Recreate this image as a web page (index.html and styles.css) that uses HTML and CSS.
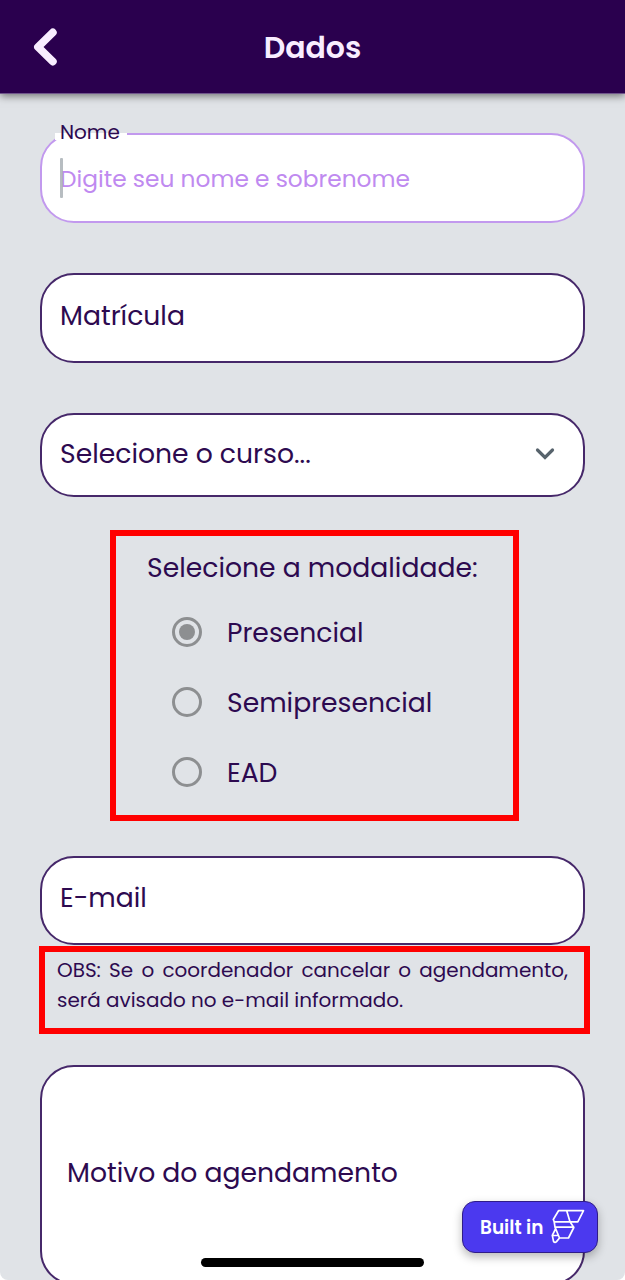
FILE: index.html
```html
<!DOCTYPE html>
<html lang="pt-BR">
<head>
<meta charset="utf-8">
<title>Dados</title>
<link rel="stylesheet" href="styles.css">
</head>
<body>
<div class="screen">
  <header class="topbar">
    <svg class="back" width="30" height="46" viewBox="0 0 30 46"><path d="M22.800 8.500L8 23L22.800 37.500" fill="none" stroke="#f8edff" stroke-width="7.800" stroke-linecap="round" stroke-linejoin="round"/></svg>
    <h1 class="title">Dados</h1>
  </header>
  <main class="form">
    <div class="field field-active">
      <span class="float-label">Nome</span>
      <span class="placeholder">Digite seu nome e sobrenome</span>
      <span class="caret"></span>
    </div>
    <div class="field field-id"><span>Matrícula</span></div>
    <div class="field field-select">
      <span>Selecione o curso...</span>
      <svg width="22" height="16" viewBox="0 0 22 16"><path d="M3.500 4L11 11.500L18.500 4" fill="none" stroke="#57636c" stroke-width="3.200" stroke-linecap="round"/></svg>
    </div>
    <section class="mode">
      <h2 class="mode-title">Selecione a modalidade:</h2>
      <div class="option"><span class="radio radio-on"></span><span>Presencial</span></div>
      <div class="option"><span class="radio"></span><span>Semipresencial</span></div>
      <div class="option"><span class="radio"></span><span>EAD</span></div>
    </section>
    <div class="field field-email"><span>E-mail</span></div>
    <p class="note">OBS: Se o coordenador cancelar o agendamento, será avisado no e-mail informado.</p>
    <div class="field field-reason"><span>Motivo do agendamento</span></div>
  </main>
  <div class="badge">
    <span>Built in</span>
    <svg width="36" height="38" viewBox="0 1 36 38" fill="none" stroke="#fff" stroke-width="1.700" stroke-linejoin="round" stroke-linecap="round"><path d="M7.500 3.700H32.500L26.800 14.800H3.200L2.300 12.500ZM15.700 3.700L19 14.800L22.800 20.500L17.500 31H8.500L4 20.200M4 20.200H22.800M3.200 14.800L4 20.200M4.500 22L1.300 28.300L2.600 34.600Q4 36 5.500 34.600L8.500 31M1.300 28.500H7.500"/></svg>
  </div>
  <div class="home-bar"></div>
</div>
</body>
</html>
```
FILE: styles.css
```css
* { box-sizing: border-box; }
body { margin: 0; background: #fff; font-family: Poppins, Inter, sans-serif; color: #2d0a50; }
.screen { position: relative; width: 625px; height: 1280px; overflow: hidden; background: #e0e3e7; border-radius: 0 0 8px 8px; }
.topbar { height: 94px; display: grid; grid-template-columns: 80px 1fr 80px; align-items: center; background: #2a004e; border-bottom: 1px solid #70558c; box-shadow: 0 2px 8px rgba(0,0,0,.5); }
.back { margin-left: 30px; }
.title { margin: 3px 0 0; text-align: center; font-size: 30px; line-height: 40px; font-weight: 600; color: #f8edff; }
.form { display: flex; flex-direction: column; padding: 39px 40px 0; }
.field { position: relative; display: flex; align-items: center; flex: none; height: 90px; border: 2px solid #46286a; border-radius: 34px; background: #fff; padding: 0 18px 5px; font-size: 26.65px; line-height: 40px; white-space: nowrap; }
.field-active { border-color: #c299ee; padding: 2px 18px 0; }
.float-label { position: absolute; left: 13px; top: -11px; padding: 0 7px 0 5px; background: linear-gradient(transparent 9px, #fff 9px); font-size: 20px; line-height: 16px; }
.caret { position: absolute; left: 18px; top: 23px; width: 3px; height: 40px; background: rgba(170,178,182,.85); border-radius: 1px; }
.placeholder { color: #bf8af0; font-size: 23.3px; }
.field-id { margin-top: 50px; }
.field-select { margin-top: 50px; height: 84px; padding: 0 27px 2px 18px; justify-content: space-between; }
.mode { width: 409px; height: 291px; margin: 33px 0 0 70px; border: 6px solid #f00; padding: 12px 0 0 31px; font-size: 26.65px; }
.mode-title { margin: 0 0 9px; font-size: 26.65px; line-height: 40px; font-weight: 400; white-space: nowrap; }
.option { display: flex; align-items: center; gap: 25px; height: 70px; margin-left: 25px; line-height: 42px; }
.option span + span, .option span:last-child { padding-top: 1px; }
.radio { width: 30px; height: 30px; border: 3px solid #8d8f91; border-radius: 50%; display: grid; place-items: center; }
.radio-on::after { content: ""; width: 16px; height: 16px; border-radius: 50%; background: #8d8f91; }
.field-email { margin-top: 35px; height: 89px; }
.note { width: 551px; height: 88px; margin: 1px 0 0 -1px; border: 6px solid #f00; padding: 3px 16px 0 12px; font-size: 19.95px; line-height: 30px; text-align: justify; }
.field-reason { margin-top: 31px; height: 220px; padding: 0 25px 5px; }
.badge { position: absolute; left: 462px; top: 1201px; width: 136px; height: 52px; display: flex; align-items: center; justify-content: space-between; padding: 0 10px 0 17px; background: #4b39ef; border: 1px solid #2f1c88; border-radius: 13px; box-shadow: 0 4px 10px rgba(0,0,0,.28); color: #fff; font-size: 18.500px; font-weight: 600; white-space: nowrap; }
.home-bar { position: absolute; left: 201px; top: 1258px; width: 223px; height: 9px; border-radius: 5px; background: #000; }
```
